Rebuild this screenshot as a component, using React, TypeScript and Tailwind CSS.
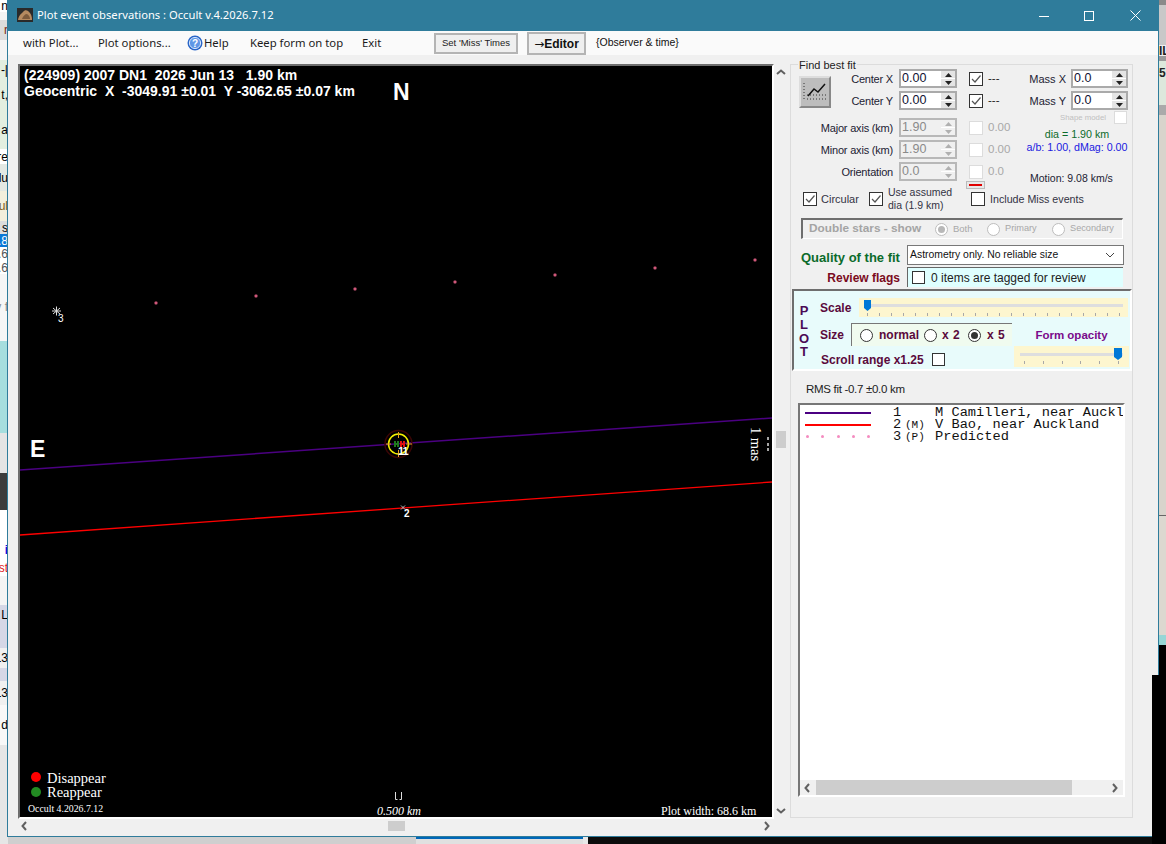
import React from "react";

const sans = "font-['Liberation_Sans',sans-serif]";
const serif = "font-['Liberation_Serif',serif]";

function Slice({ h, bg, text, color }: { h: string; bg: string; text?: string; color?: string }) {
  return (
    <div className={`${h} ${bg} ${color ?? "text-black"} flex items-center justify-end overflow-hidden whitespace-nowrap text-[12px] leading-none ${sans}`}>
      {text}
    </div>
  );
}

function LeftStrip() {
  return (
    <div className="w-[8px] shrink-0 flex flex-col">
      <Slice h="h-[12px]" bg="bg-white" text="n" />
      <Slice h="h-[8px]" bg="bg-[#f4f4f4]" />
      <Slice h="h-[20px]" bg="bg-[#dcdcdc]" text="r" color="text-[#7a2a1a]" />
      <Slice h="h-[20px]" bg="bg-[#f4f4f4]" />
      <Slice h="h-[20px]" bg="bg-[#e3efe0]" text="-|" />
      <Slice h="h-[30px]" bg="bg-[#e3efe0]" text="t," />
      <Slice h="h-[40px]" bg="bg-[#e3efe0]" text="a" />
      <Slice h="h-[15px]" bg="bg-white" text="re" />
      <Slice h="h-[27px]" bg="bg-[#e3e8e3]" text="lu" />
      <Slice h="h-[30px]" bg="bg-[#f3efdc]" text="ul" color="text-[#7a5a1a]" />
      <Slice h="h-[13px]" bg="bg-[#dddddd]" text="s" />
      <Slice h="h-[13px]" bg="bg-[#0a78d7]" text=".8" color="text-white" />
      <Slice h="h-[14px]" bg="bg-white" text=".6" color="text-[#555555]" />
      <Slice h="h-[13px]" bg="bg-white" text=".6" color="text-[#555555]" />
      <Slice h="h-[67px]" bg="bg-[#f6f6f6]" text="v f" color="text-[#888888]" />
      <Slice h="h-[93px]" bg="bg-[#a6dede]" />
      <Slice h="h-[40px]" bg="bg-[#e4e4e4]" />
      <Slice h="h-[37px]" bg="bg-[#3c3c3c]" />
      <Slice h="h-[30px]" bg="bg-white" />
      <Slice h="h-[20px]" bg="bg-white" text="i" color="text-[#1010e0] font-bold" />
      <Slice h="h-[16px]" bg="bg-white" text="st" color="text-[#e02020]" />
      <Slice h="h-[29px]" bg="bg-[#f4f4f4]" />
      <Slice h="h-[20px]" bg="bg-[#d5d7e6]" text="L" />
      <Slice h="h-[23px]" bg="bg-[#d5d7e6]" />
      <Slice h="h-[20px]" bg="bg-[#f0f0f0]" text="13" />
      <Slice h="h-[13px]" bg="bg-[#d5d7e6]" />
      <Slice h="h-[25px]" bg="bg-[#f0f0f0]" text="13" />
      <Slice h="h-[40px]" bg="bg-[#f8f8f8]" text="d" />
      <Slice h="h-[99px]" bg="bg-[#e6e6e6]" />
    </div>
  );
}

function RightStrip() {
  return (
    <div className={`flex-1 flex flex-col ${sans}`}>
      <div className="h-[5px] bg-[#8a8a8a]" />
      <div className="h-[40px] bg-[#c8c8c8]" />
      <div className="h-[11px] bg-[#efefef] flex items-center text-[12px] font-bold text-[#222222] leading-none pl-[1px]">IL</div>
      <div className="h-[5px] bg-[#999999]" />
      <div className="h-[44px] bg-[#dde8dc] flex items-center text-[12px] font-bold text-[#222222] leading-none pl-[1px] pb-[20px]">5</div>
      <div className="h-[10px] bg-[#aaaaaa]" />
      <div className="h-[400px] bg-[#d8d4cc] flex justify-end">
        <div className="w-[1px] bg-[#555555]" />
        <div className="w-[1px] bg-[#8fcc3a]" />
      </div>
      <div className="h-[120px] bg-[#dcd8d0] border-t border-[#666666]" />
      <div className="h-[10px] bg-[#96d6d6]" />
      <div className="flex-1 bg-black" />
    </div>
  );
}

function WinIcon() {
  return (
    <svg width="16" height="14" viewBox="0 0 16 14">
      <rect width="16" height="14" fill="#2a2a2a" />
      <path d="M1 12 C2 7 4 6 6 4 C8 1 11 2 13 5 C15 8 15 10 15 12 Z" fill="#b58a60" />
      <path d="M5 11 C6 8 8 6 10 6 C12 7 13 9 13 11 Z" fill="#7c5a3c" />
    </svg>
  );
}

function TitleBar() {
  return (
    <div className="h-[30px] bg-[#2f7c9b] flex items-center shrink-0">
      <div className="ml-[9px] mt-[-2px]"><WinIcon /></div>
      <div className="ml-[4px] mt-[-1px] text-white text-[11.2px] font-['Noto_Sans',sans-serif] whitespace-nowrap">Plot event observations : Occult v.4.2026.7.12</div>
      <div className="ml-auto flex items-center mt-[-1px] pr-[17px]">
        <svg width="10" height="10" viewBox="0 0 10 10" className="mr-[35px]"><path d="M0 5.5H10" stroke="white" strokeWidth="1" /></svg>
        <svg width="10" height="10" viewBox="0 0 10 10" className="mr-[36px]"><rect x="0.5" y="0.5" width="9" height="9" fill="none" stroke="white" strokeWidth="1" /></svg>
        <svg width="11" height="11" viewBox="0 0 11 11"><path d="M0.5 0.5L10.5 10.5M10.5 0.5L0.5 10.5" stroke="white" strokeWidth="1" /></svg>
      </div>
    </div>
  );
}

function MenuBar() {
  const item = "text-[11.3px] text-[#1a1a1a] font-['Noto_Sans',sans-serif] whitespace-nowrap";
  return (
    <div className="h-[24px] bg-[#fafafa] flex items-center shrink-0 pl-[15px]">
      <span className={`${item} w-[75px]`}>with Plot...</span>
      <span className={`${item} w-[89px]`}>Plot options...</span>
      <svg width="16" height="16" viewBox="0 0 16 16" className="mr-[1px]">
        <circle cx="8" cy="8" r="7.5" fill="#2a66c8" />
        <circle cx="8" cy="8" r="5.6" fill="#5f97e6" stroke="#d4e4fb" strokeWidth="1" />
        <text x="8" y="11.5" textAnchor="middle" fontSize="10" fontWeight="700" fill="white" fontFamily="Liberation Sans">?</text>
      </svg>
      <span className={`${item} w-[46px]`}>Help</span>
      <span className={`${item} w-[112px]`}>Keep form on top</span>
      <span className={`${item} w-[72px]`}>Exit</span>
      <div className={`h-[21px] w-[84px] border-2 border-[#b4b4b4] bg-[#efefef] flex items-center justify-center text-[9.5px] text-[#222222] whitespace-nowrap ${sans}`}>Set 'Miss' Times</div>
      <div className={`ml-[9px] h-[23px] w-[59px] mt-[1px] border-2 border-[#b4b4b4] bg-[#efefef] flex items-center justify-center text-[12px] font-bold text-[#111111] whitespace-nowrap ${sans}`}>
        <span className="font-['DejaVu_Sans',sans-serif] font-normal">→</span>Editor
      </div>
      <span className={`ml-[10px] text-[10.5px] text-[#111111] whitespace-nowrap ${sans}`}>{"{Observer & time}"}</span>
    </div>
  );
}

function Arrow({ dir }: { dir: "left" | "right" | "up" | "down" }) {
  const d = {
    left: "M6 1L2.5 5L6 9",
    right: "M3 1L6.5 5L3 9",
    up: "M1 6L5 2.5L9 6",
    down: "M1 3L5 6.5L9 3",
  }[dir];
  return (
    <svg width="10" height="10" viewBox="0 0 10 10">
      <path d={d} fill="none" stroke="#606060" strokeWidth="2" />
    </svg>
  );
}

function PlotCanvas() {
  const dots: [number, number][] = [[156, 303], [256, 296], [355, 289], [455, 282], [555, 275], [655, 268], [755, 260]];
  return (
    <div className="relative w-[752px] h-[751px] bg-black overflow-hidden">
      <svg width="752" height="751" viewBox="20 66 752 751" className="absolute left-0 top-0">
        <line x1="20" y1="470" x2="772" y2="418" stroke="#4b0082" strokeWidth="1.5" />
        <line x1="20" y1="535" x2="772" y2="482" stroke="#ff0000" strokeWidth="1.3" />
        {dots.map(([x, y]) => (
          <rect key={x} x={x - 1.5} y={y - 1.5} width="3" height="3" rx="1" fill="#d0587a" />
        ))}
        <path d="M52 311H61M56.5 306.5V315.5M53 308L60 314M60 308L53 314" stroke="#dddddd" strokeWidth="1" />
        <circle cx="398.5" cy="444" r="13.5" fill="none" stroke="#3a0505" strokeWidth="1.5" />
        <circle cx="398.5" cy="444" r="10" fill="none" stroke="#f5f000" strokeWidth="1.5" />
        <path d="M398.5 432V438M398.5 450V457M386 444H391M406 444H412" stroke="#e8a020" strokeWidth="1" />
        <rect x="394" y="441" width="2" height="6" fill="#1f7a1f" />
        <rect x="397" y="441" width="2" height="6" fill="#1f7a1f" />
        <rect x="394" y="443" width="5" height="2" fill="#1f7a1f" />
        <rect x="400" y="441" width="2" height="6" fill="#e01010" />
        <rect x="403" y="441" width="2" height="6" fill="#e01010" />
        <rect x="400" y="443" width="5" height="2" fill="#e01010" />
        <path d="M401 505.5L405 509.5M405 505.5L401 509.5" stroke="#bbbbbb" strokeWidth="1" />
        <circle cx="36" cy="777" r="5" fill="#ff0000" />
        <circle cx="36" cy="792" r="5" fill="#228b22" />
        <path d="M395.5 792V799.5H397.5M401.5 792V799.5H399.5" stroke="#dddddd" strokeWidth="1" fill="none" />
        <path d="M768 437V440M768 443V446M768 448V451" stroke="#dddddd" strokeWidth="1.5" />
      </svg>

      <div className={`absolute left-[4px] top-[1px] text-white font-bold text-[14px] leading-[16px] whitespace-pre ${sans}`}>{"(224909) 2007 DN1  2026 Jun 13   1.90 km"}</div>
      <div className={`absolute left-[4px] top-[17px] text-white font-bold text-[14px] leading-[16px] whitespace-pre ${sans}`}>{"Geocentric  X  -3049.91 ±0.01  Y -3062.65 ±0.07 km"}</div>
      <div className={`absolute left-[373px] top-[12px] text-white font-bold text-[23px] leading-[28px] ${sans}`}>N</div>
      <div className={`absolute left-[10px] top-[369px] text-white font-bold text-[23px] leading-[28px] ${sans}`}>E</div>
      <div className={`absolute left-[38px] top-[247px] text-white text-[10px] leading-[12px] ${sans}`}>3</div>
      <div className={`absolute left-[378px] top-[379px] text-white text-[11px] font-bold leading-[12px] tracking-[-1px] ${sans}`}>11</div>
      <div className={`absolute left-[384px] top-[442px] text-white text-[10px] font-bold leading-[12px] ${sans}`}>2</div>
      <div className={`absolute left-[719px] top-[370px] text-white text-[14.5px] leading-[16px] rotate-90 whitespace-nowrap ${serif}`}>1 mas</div>
      <div className={`absolute left-[27px] top-[704px] text-white text-[14.5px] leading-[16px] ${serif}`}>Disappear</div>
      <div className={`absolute left-[27px] top-[718px] text-white text-[14.5px] leading-[16px] ${serif}`}>Reappear</div>
      <div className={`absolute left-[8px] top-[737px] text-white text-[9.8px] leading-[12px] whitespace-nowrap ${serif}`}>Occult 4.2026.7.12</div>
      <div className={`absolute left-[357px] top-[737px] text-white text-[12px] italic leading-[16px] whitespace-nowrap ${serif}`}>0.500 km</div>
      <div className={`absolute left-[641px] top-[737px] text-white text-[12px] leading-[16px] whitespace-nowrap ${serif}`}>Plot width: 68.6 km</div>
    </div>
  );
}

function PlotArea() {
  return (
    <div className="w-[780px] shrink-0 pl-[10px] pt-[9px] flex flex-col">
      <div className="flex">
        <div className="border-l-2 border-t-2 border-l-[#6e6e6e] border-t-[#6e6e6e] border-r-2 border-b-2 border-r-white border-b-white">
          <PlotCanvas />
        </div>
        <div className="w-[14px] h-[755px] flex flex-col items-center">
          <div className="h-[14px] mt-[2px] flex items-center justify-center"><Arrow dir="up" /></div>
          <div className="w-[10px] h-[17px] mt-[351px] bg-[#cdcdcd]" />
          <div className="flex-1" />
          <div className="h-[14px] mb-[1px] flex items-center justify-center"><Arrow dir="down" /></div>
        </div>
      </div>
      <div className="h-[14px] w-[756px] flex items-center">
        <div className="w-[14px] flex justify-center"><Arrow dir="left" /></div>
        <div className="w-[17px] h-[10px] ml-[356px] bg-[#cdcdcd]" />
        <div className="flex-1" />
        <div className="w-[14px] flex justify-center"><Arrow dir="right" /></div>
      </div>
    </div>
  );
}

function Check({ on, disabled, size }: { on?: boolean; disabled?: boolean; size?: string }) {
  return (
    <div className={`${size ?? "w-[14px] h-[14px]"} shrink-0 border ${disabled ? "border-[#dcdcdc] bg-white" : "border-[#333333] bg-white"} flex items-center justify-center`}>
      {on && (
        <svg width="12" height="12" viewBox="0 0 12 12">
          <path d="M2 6L5 9L10.5 2.5" fill="none" stroke="#555555" strokeWidth="1.2" />
        </svg>
      )}
    </div>
  );
}

function Radio({ on, disabled }: { on?: boolean; disabled?: boolean }) {
  return (
    <div className={`w-[13px] h-[13px] shrink-0 rounded-full border ${disabled ? "border-[#bdbdbd]" : "border-[#333333]"} bg-white flex items-center justify-center`}>
      {on && <div className={`w-[7px] h-[7px] rounded-full ${disabled ? "bg-[#b8b8b8]" : "bg-[#333333]"}`} />}
    </div>
  );
}

function Spinner({ value, disabled, width }: { value: string; disabled?: boolean; width: string }) {
  const tri = disabled ? "#b0b0b0" : "#222222";
  return (
    <div className={`${width} h-[19px] shrink-0 border-2 ${disabled ? "border-[#b8b8b8] bg-[#f0f0f0]" : "border-[#aaaaaa] bg-white"} flex`}>
      <div className={`flex-1 pl-[1px] text-[12.5px] leading-[15px] ${disabled ? "text-[#8a8a8a]" : "text-[#111133]"} ${sans}`}>{value}</div>
      <div className="w-[14px] flex flex-col gap-[1px] bg-white">
        <div className={`flex-1 ${disabled ? "bg-[#f0f0f0]" : "bg-[#e4e4e4]"} flex items-center justify-center`}>
          <svg width="7" height="4" viewBox="0 0 7 4"><path d="M3.5 0L7 4H0Z" fill={tri} /></svg>
        </div>
        <div className={`flex-1 ${disabled ? "bg-[#f0f0f0]" : "bg-[#e4e4e4]"} flex items-center justify-center`}>
          <svg width="7" height="4" viewBox="0 0 7 4"><path d="M0 0H7L3.5 4Z" fill={tri} /></svg>
        </div>
      </div>
    </div>
  );
}

function FitRow({ label, labelW, value, disabled, extra }: { label: string; labelW: string; value: string; disabled?: boolean; extra: string }) {
  return (
    <div className="h-[19px] flex items-center">
      <div className={`${labelW} pr-[6px] pt-[1px] text-right whitespace-nowrap text-[11px] tracking-[-0.2px] text-[#222233] ${sans}`}>{label}</div>
      <Spinner value={value} disabled={disabled} width="w-[58px]" />
      <div className="ml-[12px]"><Check on={!disabled} disabled={disabled} /></div>
      <div className={`ml-[5px] text-[11.5px] whitespace-nowrap ${disabled ? "text-[#a8a8a8]" : "text-[#222222]"} ${sans}`}>{extra}</div>
    </div>
  );
}

function Ticks({ n }: { n: number }) {
  return (
    <div className="flex justify-between">
      {Array.from({ length: n }, (_, i) => (
        <div key={i} className="w-[1px] h-[3px] bg-[#a8a8a8]" />
      ))}
    </div>
  );
}

function Thumb() {
  return (
    <svg width="7" height="11" viewBox="0 0 7 11"><path d="M0 0H7V8L3.5 11L0 8Z" fill="#0078d7" /></svg>
  );
}

function FitButton() {
  return (
    <div className="w-[32px] h-[32px] border-2 border-t-[#dddddd] border-l-[#dddddd] border-r-[#888888] border-b-[#888888] bg-[#bdbdbd] flex items-center justify-center">
      <svg width="24" height="20" viewBox="0 0 24 20">
        <path d="M1 1V18M4 17H23M4 13H23" stroke="#333333" strokeWidth="1" strokeDasharray="1 2" fill="none" />
        <path d="M5 14L11 7L15 10L22 2" stroke="#111111" strokeWidth="1.5" fill="none" />
      </svg>
    </div>
  );
}

function FitSection() {
  return (
    <div className={`flex pt-[4px] ${sans}`}>
      <div className="w-[237px] shrink-0">
        <div className="flex">
          <div className="w-[40px] pl-[8px] pt-[7px] shrink-0"><FitButton /></div>
          <div className="flex flex-col gap-[3px]">
            <FitRow label="Center X" labelW="w-[68px]" value="0.00" extra="---" />
            <FitRow label="Center Y" labelW="w-[68px]" value="0.00" extra="---" />
          </div>
        </div>
        <div className="mt-[8px] flex flex-col gap-[3px]">
          <FitRow label="Major axis (km)" labelW="w-[108px]" value="1.90" disabled extra="0.00" />
          <FitRow label="Minor axis (km)" labelW="w-[108px]" value="1.90" disabled extra="0.00" />
          <FitRow label="Orientation" labelW="w-[108px]" value="0.0" disabled extra="0.0" />
        </div>
        <div className="ml-[175px] w-[19px] h-[8px] border border-[#bbbbbb] bg-[#e8e8e8] flex items-center justify-center">
          <div className="w-[13px] h-[2px] bg-[#e00000]" />
        </div>
      </div>
      <div className="w-[102px] shrink-0">
        <div className="flex flex-col gap-[3px]">
          {["Mass X", "Mass Y"].map((l) => (
            <div key={l} className="h-[19px] flex items-center">
              <div className="w-[38px] pt-[1px] text-right whitespace-nowrap text-[11px] text-[#222233]">{l}</div>
              <div className="ml-[5px]"><Spinner value="0.0" width="w-[57px]" /></div>
            </div>
          ))}
        </div>
        <div className="mt-[1px] h-[13px] flex items-center justify-end pr-[3px]">
          <span className="text-[7.8px] text-[#c0c0c0] whitespace-nowrap mr-[8px]">Shape model</span>
          <Check size="w-[13px] h-[13px]" disabled />
        </div>
        <div className="w-[98px] mt-[3px] flex justify-center text-[10.7px] leading-[14px] whitespace-nowrap text-[#0b6b2b]">dia = 1.90 km</div>
        <div className="w-[98px] flex justify-center text-[10.7px] leading-[13px] whitespace-nowrap text-[#1a1ae0]">a/b: 1.00, dMag: 0.00</div>
        <div className="mt-[17px] pl-[2px] text-[10.5px] leading-[14px] whitespace-nowrap text-[#222233]">Motion: 9.08 km/s</div>
      </div>
    </div>
  );
}

function OptionsRow() {
  return (
    <div className={`mt-[3px] h-[14px] flex items-center pl-[12px] text-[11px] text-[#333344] ${sans}`}>
      <Check on />
      <span className="ml-[4px] w-[48px] whitespace-nowrap">Circular</span>
      <Check on />
      <span className="ml-[5px] w-[83px] text-[10.5px] leading-[13px] whitespace-nowrap">Use assumed<br />dia (1.9 km)</span>
      <Check />
      <span className="ml-[5px] text-[10.7px] whitespace-nowrap">Include Miss events</span>
    </div>
  );
}

function DoubleStars() {
  return (
    <div className={`mt-[12px] ml-[10px] w-[322px] h-[21px] border-t-2 border-l-2 border-t-[#6e6e6e] border-l-[#6e6e6e] border-r border-b border-r-white border-b-white flex items-center ${sans}`}>
      <span className="ml-[6px] w-[126px] text-[11.8px] font-bold text-[#a4a4a4] whitespace-nowrap">Double stars - show</span>
      <Radio on disabled />
      <span className="ml-[5px] w-[34px] text-[9.5px] text-[#a8a8a8]">Both</span>
      <Radio disabled />
      <span className="ml-[5px] w-[47px] text-[9.2px] text-[#a8a8a8]">Primary</span>
      <Radio disabled />
      <span className="ml-[5px] text-[9.2px] text-[#a8a8a8]">Secondary</span>
    </div>
  );
}

function QualityRows() {
  return (
    <div className={sans}>
      <div className="mt-[6px] h-[20px] flex items-center">
        <div className="w-[116px] pl-[10px] pt-[5px] text-[13px] font-bold text-[#0b6b2b] whitespace-nowrap">Quality of the fit</div>
        <div className="w-[217px] h-[20px] border border-[#777777] bg-white flex items-center pl-[2px] pr-[8px] justify-between">
          <span className="text-[10.4px] text-[#111111] whitespace-nowrap">Astrometry only. No reliable size</span>
          <svg width="10" height="6" viewBox="0 0 10 6"><path d="M1 1L5 5L9 1" fill="none" stroke="#444444" strokeWidth="1" /></svg>
        </div>
      </div>
      <div className="mt-[2px] h-[20px] flex items-center">
        <div className="w-[109px] pt-[2px] text-right text-[12px] font-bold text-[#7a0a20] whitespace-nowrap">Review flags</div>
        <div className="ml-[7px] w-[216px] h-[20px] border-t border-l border-t-[#666666] border-l-[#666666] bg-[#dfffff] flex items-center pl-[4px]">
          <Check size="w-[13px] h-[13px]" />
          <span className="ml-[6px] text-[12px] text-[#222222] whitespace-nowrap">0 items are tagged for review</span>
        </div>
      </div>
    </div>
  );
}

function PlotPanel() {
  const label = "text-[12px] font-bold text-[#5a0a3c] whitespace-nowrap";
  return (
    <div className={`mt-[2px] ml-[1px] w-[340px] h-[82px] border-t-2 border-l-2 border-t-[#6e6e6e] border-l-[#6e6e6e] border-r-2 border-b-2 border-r-white border-b-white bg-[#e8fbfb] flex ${sans}`}>
      <div className="w-[26px] pl-[0px] pt-[13px] shrink-0">
        {["P", "L", "O", "T"].map((c) => (
          <div key={c} className="w-[20px] text-center text-[13px] leading-[13.8px] font-bold text-[#4b0a55]">{c}</div>
        ))}
      </div>
      <div className="flex flex-col">
        <div className="mt-[7px] h-[19px] flex items-center">
          <div className={`${label} w-[39px] mt-[1px]`}>Scale</div>
          <div className="w-[269px] h-[19px] bg-[#fdf6cf] px-[5px] pt-[2px]">
            <div className="h-[11px] flex items-center relative">
              <div className="absolute left-0 right-0 top-[4px] h-[3px] bg-[#dedede]" />
              <div className="relative"><Thumb /></div>
            </div>
            <div className="px-[3px] mt-[2px]"><Ticks n={22} /></div>
          </div>
        </div>
        <div className="flex mt-[6px]">
          <div className="w-[194px]">
            <div className="h-[23px] flex items-center">
              <div className={`${label} w-[31px]`}>Size</div>
              <div className="w-[161px] h-[23px] border-t border-l border-t-[#777777] border-l-[#777777] bg-[#f0fbef] flex items-center pl-[8px] text-[12px] font-bold text-[#5a0a3c] whitespace-nowrap">
                <Radio />
                <span className="ml-[6px] w-[45px]">normal</span>
                <Radio />
                <span className="ml-[5px] w-[26px] tracking-[0.5px]">x 2</span>
                <Radio on />
                <span className="ml-[6px] tracking-[0.5px]">x 5</span>
              </div>
            </div>
            <div className="mt-[6px] h-[14px] flex items-center">
              <div className={`${label} w-[112px] pl-[1px] pt-[2px]`}>Scroll range x1.25</div>
              <Check size="w-[13px] h-[13px]" />
            </div>
          </div>
          <div className="w-[115px]">
            <div className="h-[23px] pt-[2px] flex items-center justify-center text-[11.5px] font-bold text-[#7a0a8a] whitespace-nowrap">Form opacity</div>
            <div className="h-[21px] bg-[#fdf6cf] px-[6px] pt-[2px]">
              <div className="h-[12px] flex items-center justify-end relative">
                <div className="absolute left-0 right-0 top-[5px] h-[3px] bg-[#dedede]" />
                <div className="relative mr-[1px]"><svg width="8" height="12" viewBox="0 0 8 12"><path d="M0 0H8V9L4 12L0 9Z" fill="#0078d7" /></svg></div>
              </div>
              <div className="px-[4px] mt-[1px]"><Ticks n={6} /></div>
            </div>
          </div>
        </div>
      </div>
    </div>
  );
}

function LegendRow({ swatch, num, tag, text }: { swatch: React.ReactNode; num: string; tag: string; text: string }) {
  return (
    <div className="h-[12px] flex items-center font-['Liberation_Mono',monospace] text-[13.7px] leading-[12px] text-[#111111] whitespace-pre">
      <div className="ml-[5px] w-[66px] shrink-0 flex items-center mt-[-1px]">{swatch}</div>
      <div className="ml-[22px] w-[12px] shrink-0">{num}</div>
      <div className="w-[30px] shrink-0 text-[11px] tracking-[0px]">{tag}</div>
      <div className="overflow-hidden">{text}</div>
    </div>
  );
}

function LegendBox() {
  return (
    <div className="mt-[5px] ml-[7px] w-[327px] h-[394px] border-t-2 border-l-2 border-t-[#777777] border-l-[#777777] border-r-2 border-b-2 border-r-white border-b-white bg-white flex flex-col">
      <div className="flex-1 pt-[2px]">
        <LegendRow swatch={<div className="w-full h-[2px] bg-[#4b0082]" />} num="1" tag="" text="M Camilleri, near Auckl" />
        <LegendRow swatch={<div className="w-full h-[2px] bg-[#ff0000]" />} num="2" tag="(M)" text="V Bao, near Auckland" />
        <LegendRow
          swatch={
            <div className="w-full flex justify-between px-[1px]">
              {[0, 1, 2, 3, 4].map((i) => (
                <div key={i} className="w-[3px] h-[3px] rounded-full bg-[#f48cc0]" />
              ))}
            </div>
          }
          num="3"
          tag="(P)"
          text="Predicted"
        />
      </div>
      <div className="h-[15px] bg-[#f0f0f0] flex items-center shrink-0">
        <div className="w-[16px] flex justify-center"><Arrow dir="left" /></div>
        <div className="w-[256px] h-[15px] bg-[#cdcdcd]" />
        <div className="flex-1" />
        <div className="w-[16px] flex justify-center"><Arrow dir="right" /></div>
      </div>
    </div>
  );
}

function SidePanel() {
  return (
    <div className="pt-[9px] pl-[2px]">
      <div className="relative w-[343px] h-[754px] border border-[#dcdcdc]">
        <div className={`absolute left-[7px] top-[-6px] bg-[#f0f0f0] px-[1px] text-[11px] leading-[13px] text-[#222222] whitespace-nowrap ${sans}`}>Find best fit</div>
        <FitSection />
        <OptionsRow />
        <DoubleStars />
        <QualityRows />
        <PlotPanel />
        <div className={`mt-[9px] ml-[15px] h-[18px] text-[11.5px] leading-[18px] text-[#222222] tracking-[-0.3px] ${sans}`}>RMS fit -0.7 ±0.0 km</div>
        <LegendBox />
      </div>
    </div>
  );
}

export default function App() {
  return (
    <div className="relative w-[1166px] h-[844px] overflow-hidden flex bg-black">
      <LeftStrip />
      <div className="w-[1150px] shrink-0 flex flex-col justify-end">
        <div className="h-[8px] flex">
          <div className="w-[408px] bg-[#cfcfcf]" />
          <div className="w-[167px] bg-[#e0e0e0] border-t-[3px] border-[#0067b8]" />
          <div className="w-[5px] bg-[#e8e8e8]" />
          <div className="flex-1 bg-[#0c0c0c]" />
        </div>
      </div>
      <RightStrip />

      <div className="absolute left-[7px] top-0 w-[1152px] h-[837px] border border-[#2f7c9b] bg-[#f0f0f0] flex flex-col">
        <TitleBar />
        <MenuBar />
        <div className="flex">
          <PlotArea />
          <SidePanel />
        </div>
      </div>
      <div className="absolute left-[1152px] top-[675px] w-[14px] h-[169px] bg-black" />
    </div>
  );
}
